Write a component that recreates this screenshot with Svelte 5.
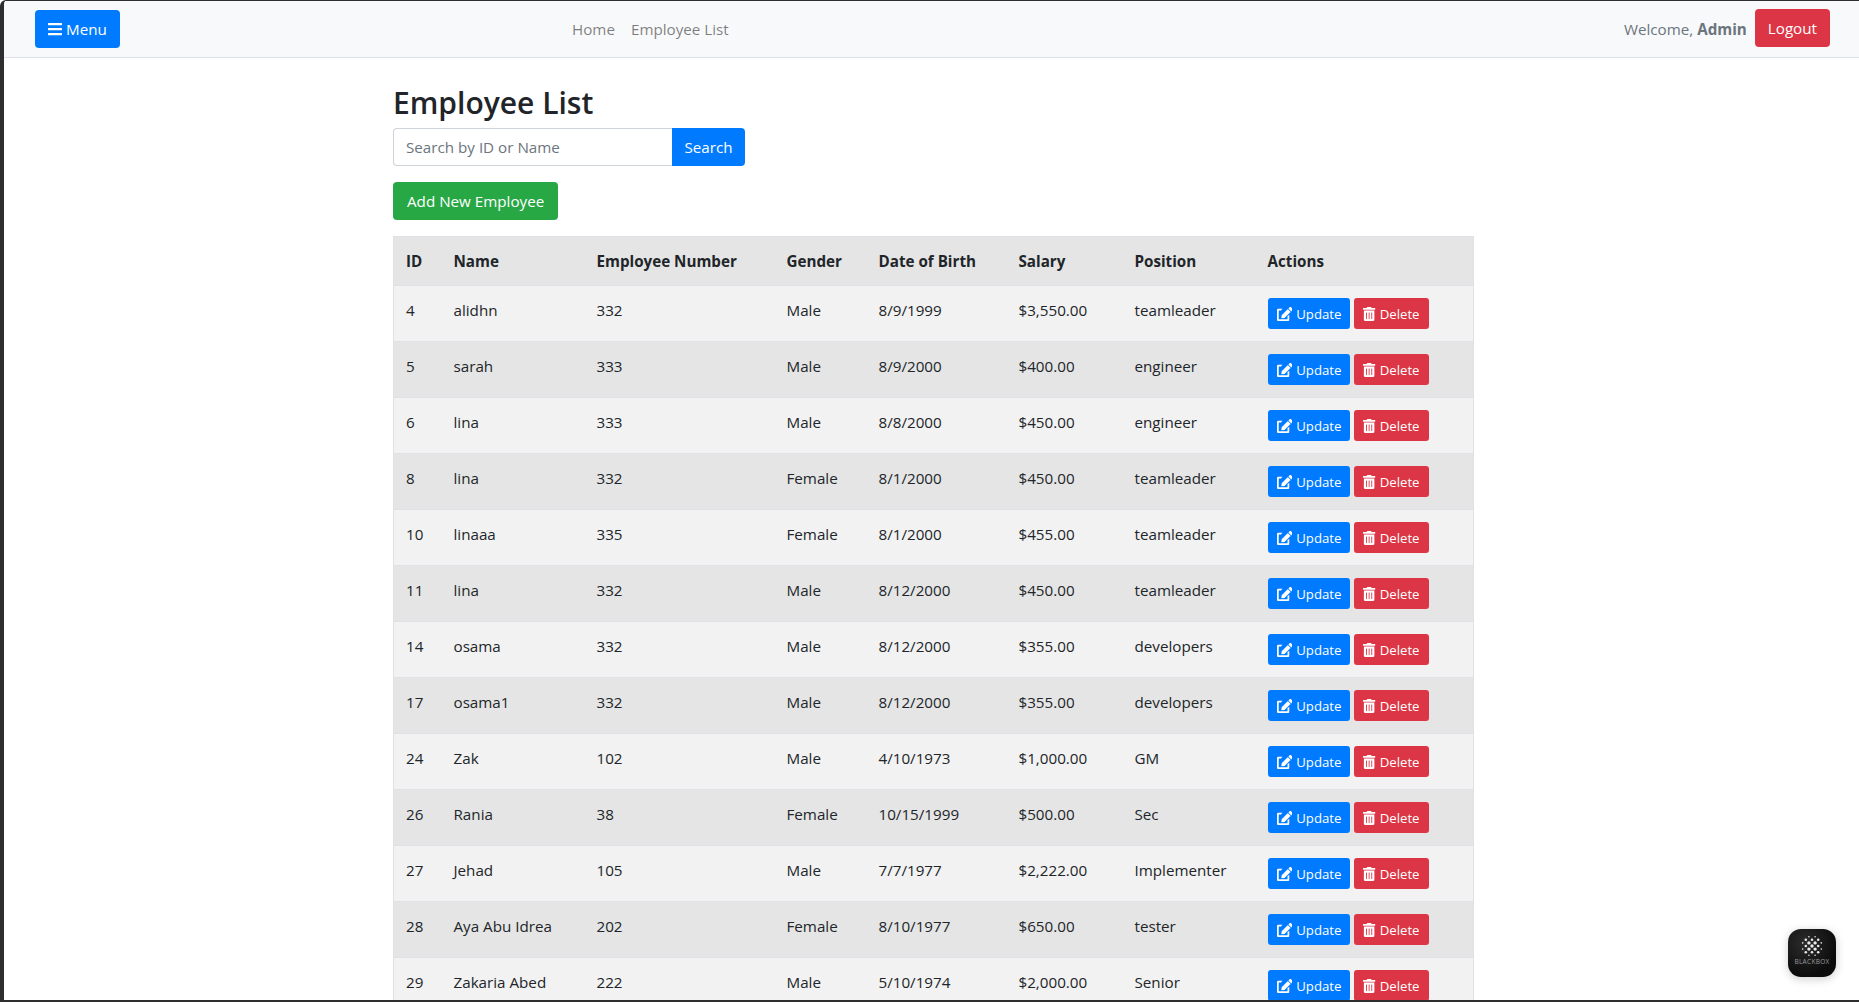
<script>
  const rows = [
    [4, 'alidhn', 332, 'Male', '8/9/1999', '$3,550.00', 'teamleader'],
    [5, 'sarah', 333, 'Male', '8/9/2000', '$400.00', 'engineer'],
    [6, 'lina', 333, 'Male', '8/8/2000', '$450.00', 'engineer'],
    [8, 'lina', 332, 'Female', '8/1/2000', '$450.00', 'teamleader'],
    [10, 'linaaa', 335, 'Female', '8/1/2000', '$455.00', 'teamleader'],
    [11, 'lina', 332, 'Male', '8/12/2000', '$450.00', 'teamleader'],
    [14, 'osama', 332, 'Male', '8/12/2000', '$355.00', 'developers'],
    [17, 'osama1', 332, 'Male', '8/12/2000', '$355.00', 'developers'],
    [24, 'Zak', 102, 'Male', '4/10/1973', '$1,000.00', 'GM'],
    [26, 'Rania', 38, 'Female', '10/15/1999', '$500.00', 'Sec'],
    [27, 'Jehad', 105, 'Male', '7/7/1977', '$2,222.00', 'Implementer'],
    [28, 'Aya Abu Idrea', 202, 'Female', '8/10/1977', '$650.00', 'tester'],
    [29, 'Zakaria Abed', 222, 'Male', '5/10/1974', '$2,000.00', 'Senior']
  ]
  const heads = ['ID', 'Name', 'Employee Number', 'Gender', 'Date of Birth', 'Salary', 'Position', 'Actions']
  const widths = [48, 143, 190, 92, 140, 116, 133, 218]

  // logo dots: brighter in the middle, fading to the rim
  const dots = []
  for (let y = -3; y <= 3; y++) {
    for (let x = -3; x <= 3; x++) {
      const d = Math.hypot(x, y)
      if (d <= 3.4 && (x + y) % 2 === 0) {
        dots.push({ x: x * 3.1, y: y * 3.1, r: d < 1.6 ? 1.7 : d < 2.9 ? 1.3 : 0.8 })
      }
    }
  }
</script>

<div class="frame">
  <nav class="navbar">
    <button class="btn blue menu">
      <svg class="ico" viewBox="0 0 448 512"><path d="M16 132h416c8.837 0 16-7.163 16-16V76c0-8.837-7.163-16-16-16H16C7.163 60 0 67.163 0 76v40c0 8.837 7.163 16 16 16zm0 160h416c8.837 0 16-7.163 16-16v-40c0-8.837-7.163-16-16-16H16c-8.837 0-16 7.163-16 16v40c0 8.837 7.163 16 16 16zm0 160h416c8.837 0 16-7.163 16-16v-40c0-8.837-7.163-16-16-16H16c-8.837 0-16 7.163-16 16v40c0 8.837 7.163 16 16 16z"/></svg>
      Menu
    </button>
    <div class="links">
      <a href="#home">Home</a>
      <a href="#list">Employee List</a>
    </div>
    <div class="spacer"></div>
    <span class="welcome">Welcome, <b>Admin</b></span>
    <button class="btn red logout">Logout</button>
  </nav>

  <main class="content">
    <h1>Employee List</h1>
    <div class="search">
      <input type="text" placeholder="Search by ID or Name" />
      <button class="btn blue">Search</button>
    </div>
    <button class="btn green add">Add New Employee</button>

    <table>
      <colgroup>
        {#each widths as w}
          <col style="width:{w}px" />
        {/each}
      </colgroup>
      <thead>
        <tr>
          {#each heads as h}
            <th>{h}</th>
          {/each}
        </tr>
      </thead>
      <tbody>
        {#each rows as r}
          <tr>
            {#each r as cell}
              <td>{cell}</td>
            {/each}
            <td>
              <div class="actions">
                <button class="btn small blue">
                  <svg class="ico" viewBox="0 0 576 512"><path d="M402.6 83.2l90.2 90.2c3.8 3.8 3.8 10 0 13.8L274.4 405.6l-92.8 10.3c-12.4 1.4-22.9-9.1-21.5-21.5l10.3-92.8L388.8 83.2c3.8-3.8 10-3.8 13.8 0zm162-22.9l-48.8-48.8c-15.2-15.2-39.9-15.2-55.2 0l-35.4 35.4c-3.8 3.8-3.8 10 0 13.8l90.2 90.2c3.8 3.8 10 3.8 13.8 0l35.4-35.4c15.2-15.3 15.2-40 0-55.2zM384 346.2V448H64V128h73.2c3.2 0 6.2-1.3 8.5-3.5l40-40c7.6-7.6 2.2-20.5-8.5-20.5H48C21.5 64 0 85.5 0 112v352c0 26.5 21.5 48 48 48h352c26.5 0 48-21.5 48-48V306.2c0-10.7-12.9-16-20.5-8.5l-40 40c-2.2 2.3-3.5 5.3-3.5 8.5z"/></svg>
                  Update
                </button>
                <button class="btn small red">
                  <svg class="ico" viewBox="0 0 448 512"><path d="M32 464a48 48 0 0 0 48 48h288a48 48 0 0 0 48-48V128H32zm272-256a16 16 0 0 1 32 0v224a16 16 0 0 1-32 0zm-96 0a16 16 0 0 1 32 0v224a16 16 0 0 1-32 0zm-96 0a16 16 0 0 1 32 0v224a16 16 0 0 1-32 0zM432 32H312l-9.4-18.7A24 24 0 0 0 281.1 0H166.8a23.72 23.72 0 0 0-21.4 13.3L136 32H16A16 16 0 0 0 0 48v32a16 16 0 0 0 16 16h416a16 16 0 0 0 16-16V48a16 16 0 0 0-16-16z"/></svg>
                  Delete
                </button>
              </div>
            </td>
          </tr>
        {/each}
      </tbody>
    </table>
  </main>

  <div class="blackbox">
    <svg viewBox="-12 -12 24 24" class="dots">
      {#each dots as d}
        <circle cx={d.x} cy={d.y} r={d.r} fill="#e8e8e8" />
      {/each}
    </svg>
    <span>BLACKBOX</span>
  </div>
</div>

<style>
  :global(body) {
    margin: 0;
    background: #fff;
    font-family: "Open Sans", "Noto Sans", sans-serif;
    font-size: 15.2px;
    line-height: 24px;
    color: #212529;
  }
  .frame {
    position: relative;
    box-sizing: border-box;
    height: 1002px;
    overflow: hidden;
    background: #fff;
    border-style: solid;
    border-color: #2e2e2e;
    border-width: 1px 0 2px 4px;
    border-top-left-radius: 6px;
  }
  .navbar {
    display: flex;
    align-items: center;
    height: 57px;
    box-sizing: border-box;
    padding: 0 29px 0 31px;
    background: #f8f9fa;
    border-bottom: 1px solid #dee2e6;
  }
  .links { display: flex; margin-left: 444px; }
  .links a {
    padding: 8px;
    color: rgba(0, 0, 0, 0.5);
    text-decoration: none;
  }
  .spacer { flex: 1; }
  .welcome { color: #6c757d; margin-right: 8px; }
  .btn {
    display: inline-flex;
    align-items: center;
    justify-content: center;
    box-sizing: border-box;
    height: 38px;
    padding: 0 12px;
    border: 1px solid transparent;
    border-radius: 4px;
    font: inherit;
    color: #fff;
    cursor: pointer;
    white-space: nowrap;
  }
  .blue { background: #007bff; }
  .red { background: #dc3545; }
  .green { background: #28a745; }
  .menu { width: 85px; gap: 4px; }
  .menu .ico { width: 14px; height: 16px; }
  .logout { margin-bottom: 2px; }
  .ico { fill: currentColor; flex-shrink: 0; }

  .content {
    width: 1080px;
    margin-left: 389px;
    padding-top: 26px;
  }
  h1 {
    margin: 0 0 6px;
    font-size: 30px;
    font-weight: 600;
    line-height: 38px;
  }
  .search { display: flex; margin-bottom: 16px; }
  .search input {
    flex: none;
    width: 279px;
    box-sizing: border-box;
    height: 38px;
    padding: 0 12px;
    border: 1px solid #ced4da;
    border-right: 0;
    border-radius: 4px 0 0 4px;
    font: inherit;
    outline: none;
  }
  .search input::placeholder { color: #6c757d; }
  .search .btn { width: 73px; padding: 0; border-radius: 0 4px 4px 0; }
  .add { margin-bottom: 16px; padding: 0 13px; }

  table {
    width: 1080px;
    table-layout: fixed;
    border-collapse: collapse;
    border: 1px solid #dee2e6;
  }
  th, td {
    padding: 12px;
    text-align: left;
    vertical-align: top;
    border-top: 1px solid #dee2e6;
    white-space: nowrap;
  }
  th { background: #e5e5e5; font-weight: 700; }
  tbody tr:nth-child(odd) { background: #f2f2f2; }
  tbody tr:nth-child(even) { background: #e5e5e5; }
  .actions { display: flex; gap: 4px; }
  .small {
    height: 31px;
    padding: 0 8px;
    font-size: 13.2px;
    gap: 4px;
    border-radius: 3px;
  }
  .small .ico { height: 14px; width: auto; }

  .blackbox {
    position: absolute;
    right: 23px;
    bottom: 23px;
    width: 48px;
    height: 48px;
    border-radius: 13px;
    background: radial-gradient(circle at 35% 30%, #2c2c2c, #0c0c0c 70%);
    box-shadow: 0 2px 10px rgba(0, 0, 0, 0.2);
    display: flex;
    flex-direction: column;
    align-items: center;
    color: #9a9a9a;
  }
  .dots { width: 24px; height: 24px; margin-top: 5px; }
  .blackbox span {
    font-size: 6.5px;
    line-height: 8px;
    letter-spacing: 0.3px;
  }
</style>
